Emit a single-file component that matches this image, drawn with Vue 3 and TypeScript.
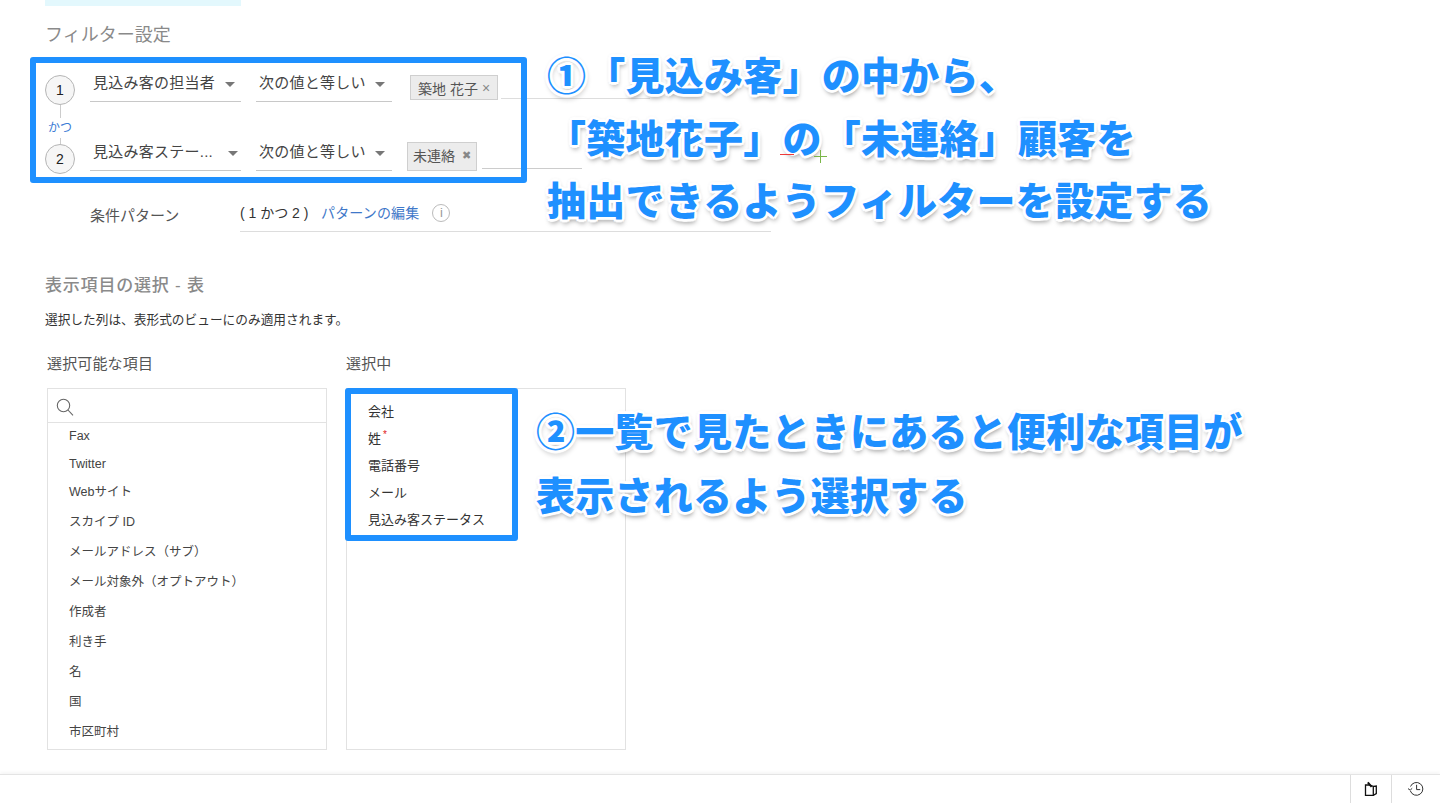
<script setup lang="ts">
const available: { label: string; tight?: boolean }[] = [
  { label: 'Fax', tight: true },
  { label: 'Twitter', tight: true },
  { label: 'Webサイト', tight: true },
  { label: 'スカイプ ID' },
  { label: 'メールアドレス（サブ）' },
  { label: 'メール対象外（オプトアウト）' },
  { label: '作成者' },
  { label: '利き手' },
  { label: '名' },
  { label: '国' },
  { label: '市区町村' },
]
const selected: { label: string; required?: boolean }[] = [
  { label: '会社' },
  { label: '姓', required: true },
  { label: '電話番号' },
  { label: 'メール' },
  { label: '見込み客ステータス' },
]
</script>

<template>
  <div class="page">
    <main class="main">
      <div class="tab-strip"></div>
      <h2 class="heading first">フィルター設定</h2>

      <section class="filters">
        <div class="rail">
          <span class="step">1</span>
          <span class="rail-line top"></span>
          <span class="and">かつ</span>
          <span class="rail-line bottom"></span>
          <span class="step">2</span>
        </div>
        <div class="rows">
          <div class="row">
            <div class="select field-a"><span class="select-text">見込み客の担当者</span><i class="caret"></i></div>
            <div class="select field-b"><span class="select-text">次の値と等しい</span><i class="caret"></i></div>
            <div class="chip chip-one">築地 花子<span class="chip-x thin">×</span></div>
            <span class="value-line line-one"></span>
          </div>
          <div class="row second">
            <div class="select field-a wide"><span class="select-text">見込み客ステー...</span><i class="caret"></i></div>
            <div class="select field-b"><span class="select-text">次の値と等しい</span><i class="caret"></i></div>
            <div class="chip chip-two">未連絡<span class="chip-x">✖</span></div>
            <span class="value-line line-two"></span>
          </div>
        </div>
      </section>

      <section class="pattern">
        <span class="pattern-label">条件パターン</span>
        <div class="pattern-value">
          <span class="pattern-text">( 1 かつ 2 )</span>
          <a class="pattern-link">パターンの編集</a>
          <span class="info">i</span>
        </div>
      </section>

      <h2 class="heading second-heading">表示項目の選択 - 表</h2>
      <p class="note">選択した列は、表形式のビューにのみ適用されます。</p>

      <section class="columns">
        <div class="column">
          <h3 class="col-title">選択可能な項目</h3>
          <div class="box">
            <div class="search">
              <svg width="18" height="18" viewBox="0 0 18 18" fill="none" stroke="#666" stroke-width="1.1">
                <circle cx="7.5" cy="7.5" r="6.2" />
                <path d="M12 12l5 5.4" />
              </svg>
            </div>
            <ul class="list">
              <li v-for="item in available" :key="item.label" class="item" :class="{ tight: item.tight }">{{ item.label }}</li>
            </ul>
          </div>
        </div>
        <div class="column">
          <h3 class="col-title">選択中</h3>
          <div class="box">
            <ul class="chosen">
              <li v-for="item in selected" :key="item.label" class="chosen-item">
                {{ item.label }}<sup v-if="item.required" class="req">*</sup>
              </li>
            </ul>
          </div>
        </div>
      </section>
    </main>

    <footer class="footer">
      <div class="foot-tab notes">
        <svg width="16" height="16" viewBox="0 0 16 16" fill="none" stroke="#111" stroke-width="1.3">
          <path d="M2.5 4h3.8l4 1.4 3-.4v7.6l-3 1.8H2.5z" />
          <path d="M10.3 5.4v9" />
          <path d="M4.8 1.4l3.8 4.4" stroke-width="2" />
        </svg>
      </div>
      <div class="foot-tab history">
        <svg width="18" height="16" viewBox="0 0 18 16" fill="none" stroke="#333" stroke-width="1">
          <path d="M3.5 5.5A6.4 6.4 0 1 1 3.4 10" />
          <path d="M1 7.6l2.2 1.6 2-1.9" />
          <path d="M9.6 3.8V8.6h3.6" />
        </svg>
      </div>
    </footer>

    <!-- annotations drawn over the screenshot -->
    <div class="frame frame-a"></div>
    <div class="frame frame-b"></div>
    <div class="callout callout-a">
      <div>①「見込み客」の中から、</div>
      <div>「築地花子」の「未連絡」顧客を</div>
      <div>抽出できるようフィルターを設定する</div>
    </div>
    <div class="callout callout-b">
      <div>②一覧で見たときにあると便利な項目が</div>
      <div>表示されるよう選択する</div>
    </div>

    <!-- row add / remove controls that peek out beside the annotation -->
    <span class="mark minus"></span>
    <span class="mark plus"></span>
  </div>
</template>

<style>
html,
body {
  margin: 0;
  background: #fff;
}
</style>

<style scoped>
.page {
  position: relative;
  width: 1440px;
  height: 803px;
  overflow: hidden;
  background: #fff;
  font-family: "Liberation Sans", "Noto Sans CJK JP", sans-serif;
  color: #444;
}
.main {
  padding-left: 45px;
}
.tab-strip {
  width: 196px;
  height: 6px;
  background: #e3f8fd;
}
.heading {
  margin: 0;
  font-size: 18px;
  line-height: 20px;
  font-weight: 400;
  color: #8a8a8a;
}
.first {
  margin-top: 19px;
  margin-bottom: -1px;
}
.second-heading {
  margin-top: 44px;
  margin-bottom: -1px;
  font-size: 17px;
  font-weight: 500;
  letter-spacing: 0.8px;
}
.filters {
  display: flex;
  margin-top: 28px;
  height: 102px;
}
.rail {
  width: 30px;
  padding-top: 3px;
  display: flex;
  flex-direction: column;
  align-items: center;
}
.step {
  width: 28px;
  height: 28px;
  flex: none;
  border: 1px solid #b5b5b5;
  border-radius: 50%;
  background: #f6f6f6;
  display: flex;
  align-items: center;
  justify-content: center;
  font-size: 14px;
  color: #222;
}
.rail-line {
  width: 1px;
  background: #ccc;
  flex: none;
}
.rail-line.top {
  height: 13px;
}
.rail-line.bottom {
  height: 6px;
}
.and {
  height: 20px;
  line-height: 20px;
  font-size: 12px;
  color: #3a7bd5;
  white-space: nowrap;
}
.rows {
  margin-left: 15px;
}
.row {
  display: flex;
  align-items: flex-end;
  height: 30px;
}
.row.second {
  margin-top: 39px;
}
.select {
  box-sizing: border-box;
  height: 30px;
  border-bottom: 1px solid #c8c8c8;
  display: flex;
  justify-content: space-between;
  padding-top: 2px;
  flex: none;
}
.field-a {
  width: 151px;
  padding-left: 3px;
  padding-right: 6px;
}
.field-a.wide {
  padding-right: 3px;
}
.field-b {
  width: 136px;
  margin-left: 15px;
  padding-left: 3px;
  padding-right: 7px;
}
.select-text {
  font-size: 15px;
  line-height: 18px;
  letter-spacing: 0.25px;
  color: #444;
  white-space: nowrap;
}
.caret {
  margin-top: 8px;
  width: 0;
  height: 0;
  border-left: 5px solid transparent;
  border-right: 5px solid transparent;
  border-top: 5px solid #777;
}
.chip {
  box-sizing: border-box;
  flex: none;
  border: 1px solid #cfcfcf;
  background: #ececec;
  color: #555;
  font-size: 14px;
  display: flex;
  align-items: center;
  white-space: nowrap;
}
.chip-one {
  margin-left: 18px;
  width: 88px;
  height: 25px;
  margin-bottom: 2px;
  padding-left: 7px;
}
.chip-two {
  margin-left: 15px;
  width: 70px;
  height: 29px;
  padding-left: 5px;
  padding-bottom: 3px;
}
.chip-x {
  margin-left: 7px;
  font-size: 11px;
  color: #888;
}
.chip-x.thin {
  margin-left: 4px;
  font-size: 14px;
}
.value-line {
  height: 1px;
  background: #ddd;
  flex: none;
}
.line-one {
  margin-left: 3px;
  width: 149px;
  margin-bottom: 3px;
}
.line-two {
  margin-left: 5px;
  width: 100px;
  margin-bottom: 2px;
  background: #ccc;
}
.pattern {
  display: flex;
  margin-top: 26px;
  height: 32px;
  padding-left: 45px;
}
.pattern-label {
  width: 150px;
  flex: none;
  padding-top: 6px;
  font-size: 15px;
  line-height: 20px;
  color: #555;
}
.pattern-value {
  width: 531px;
  box-sizing: border-box;
  border-bottom: 1px solid #ddd;
  display: flex;
  align-items: flex-start;
  padding-top: 3px;
}
.pattern-text {
  font-size: 14px;
  line-height: 20px;
  color: #333;
  width: 81px;
  white-space: nowrap;
}
.pattern-link {
  font-size: 14px;
  line-height: 20px;
  letter-spacing: 0.15px;
  color: #3f78c9;
  white-space: nowrap;
}
.info {
  box-sizing: border-box;
  margin-left: 13px;
  margin-top: 1px;
  width: 18px;
  height: 18px;
  border: 1px solid #bbb;
  border-radius: 50%;
  font-size: 13px;
  line-height: 16px;
  text-align: center;
  color: #999;
}
.note {
  margin: 16px 0 0;
  font-size: 12.7px;
  line-height: 18px;
  color: #333;
}
.columns {
  display: flex;
  margin-top: 25px;
  padding-left: 2px;
  gap: 19px;
}
.col-title {
  margin: 0 0 14px;
  font-size: 15px;
  line-height: 20px;
  font-weight: 400;
  letter-spacing: 0.15px;
  color: #555;
}
.box {
  box-sizing: border-box;
  width: 280px;
  height: 362px;
  border: 1px solid #e2e2e2;
  overflow: hidden;
}
.search {
  box-sizing: border-box;
  height: 34px;
  border-bottom: 1px solid #e2e2e2;
  padding: 9px 0 0 8px;
}
.list,
.chosen {
  margin: 0;
  padding: 0;
  list-style: none;
}
.item {
  height: 30px;
  line-height: 30px;
  padding-left: 21px;
  font-size: 12.5px;
  color: #444;
  white-space: nowrap;
}
.item.tight {
  height: 28px;
  line-height: 26px;
}
.chosen {
  padding-top: 9px;
}
.chosen-item {
  height: 27px;
  line-height: 27px;
  padding-left: 21px;
  font-size: 13px;
  color: #333;
  white-space: nowrap;
}
.req {
  color: #e02020;
  font-size: 10px;
  line-height: 0;
  margin-left: 2px;
}
.footer {
  margin-top: 24px;
  box-sizing: border-box;
  height: 29px;
  border-top: 1px solid #e4e4e4;
  box-shadow: 0 -2px 3px rgba(0, 0, 0, 0.04);
  display: flex;
  justify-content: flex-end;
}
.foot-tab {
  display: flex;
  align-items: center;
  justify-content: center;
}
.notes {
  box-sizing: border-box;
  width: 42px;
  border-left: 1px solid #ddd;
  border-right: 1px solid #ddd;
}
.history {
  width: 48px;
}
.mark {
  position: absolute;
}
.minus {
  left: 780px;
  top: 154px;
  width: 14px;
  height: 1px;
  background: #ee3b3b;
}
.plus {
  left: 814px;
  top: 156px;
  width: 13px;
  height: 1px;
  background: #7ab648;
}
.plus::after {
  content: "";
  position: absolute;
  left: 6px;
  top: -6px;
  width: 1px;
  height: 13px;
  background: #7ab648;
}
.frame {
  position: absolute;
  box-sizing: border-box;
  border: 6px solid #1e90ff;
  border-radius: 3px;
}
.frame-a {
  left: 30px;
  top: 57px;
  width: 497px;
  height: 126px;
}
.frame-b {
  left: 345px;
  top: 388px;
  width: 173px;
  height: 153px;
}
.callout {
  position: absolute;
  font-family: "Noto Sans CJK JP", sans-serif;
  font-size: 39px;
  font-weight: 900;
  letter-spacing: 0.25px;
  line-height: 62.5px;
  color: #1e90ff;
  white-space: nowrap;
  text-shadow:
    2px 0 0 #fff, -2px 0 0 #fff, 0 2px 0 #fff, 0 -2px 0 #fff,
    2px 2px 0 #fff, -2px 2px 0 #fff, 2px -2px 0 #fff, -2px -2px 0 #fff,
    3px 0 1px #fff, -3px 0 1px #fff, 0 3px 1px #fff, 0 -3px 1px #fff,
    0 0 4px rgba(0, 0, 0, 0.3),
    1px 4px 5px rgba(0, 0, 0, 0.4);
}
.callout-a {
  left: 547px;
  top: 42px;
}
.callout-b {
  left: 536px;
  top: 397px;
  line-height: 64px;
}
</style>
